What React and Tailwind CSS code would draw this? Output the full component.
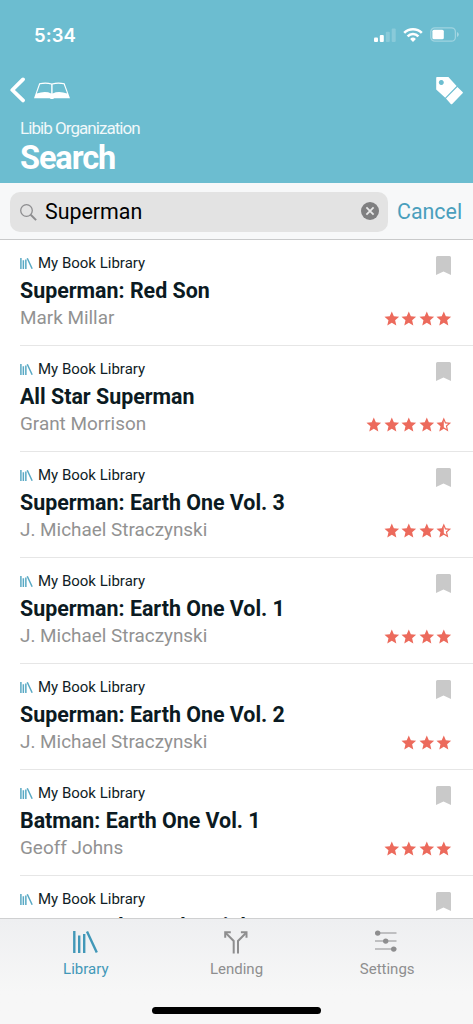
import React from "react";

const books = [
  { id: 1, title: "Superman: Red Son", author: "Mark Millar", rating: 4 },
  { id: 2, title: "All Star Superman", author: "Grant Morrison", rating: 4.5 },
  { id: 3, title: "Superman: Earth One Vol. 3", author: "J. Michael Straczynski", rating: 3.5 },
  { id: 4, title: "Superman: Earth One Vol. 1", author: "J. Michael Straczynski", rating: 4 },
  { id: 5, title: "Superman: Earth One Vol. 2", author: "J. Michael Straczynski", rating: 3 },
  { id: 6, title: "Batman: Earth One Vol. 1", author: "Geoff Johns", rating: 4 },
  { id: 7, title: "Batman: The Dark Knight R", rating: 0 },
];

const LibraryIcon = ({ className }) => (
  <svg viewBox="0 0 25 22" className={className} fill="none" stroke="currentColor">
    <path d="M1.3 0v22M6.2 4.5V22M11.2 3v19M14 .6l9.8 20.8" />
  </svg>
);

const LendingIcon = () => (
  <svg viewBox="0 0 24 23" className="w-6 h-[23px] -ml-px" fill="none" stroke="currentColor" strokeWidth="2">
    <path d="M9.7 22.5V10L2 2.2M14 22.5V10l7.7-7.8" />
    <path d="M1.2 6.8V1.2h5.6M16.9 1.2h5.6v5.6" />
  </svg>
);

const SettingsIcon = () => (
  <svg viewBox="0 0 22 22" className="w-[22px] h-[22px] -ml-[2px] -mt-[3px]" fill="currentColor">
    <path d="M0 2.6h21.5v1H0zM0 10.6h21.5v1H0zM0 18.6h21.5v1H0z" />
    <circle cx="2.7" cy="3.1" r="2.7" />
    <circle cx="10.7" cy="11.1" r="2.7" />
    <circle cx="18.7" cy="19.1" r="2.7" />
  </svg>
);

const Star = ({ half }) => (
  <svg viewBox="0 0 24 24" className="w-[17.6px] h-[17.6px]" fill="#ec6a5c">
    {half ? (
      <path d="M22 9.24l-7.19-.62L12 2 9.19 8.63 2 9.24l5.46 4.73L5.82 21 12 17.27 18.18 21l-1.63-7.03L22 9.24zM12 15.4V6.1l1.71 4.04 4.38.38-3.32 2.88 1 4.28L12 15.4z" />
    ) : (
      <path d="M12 17.27L18.18 21l-1.64-7.03L22 9.24l-7.19-.61L12 2 9.19 8.63 2 9.24l5.46 4.73L5.82 21z" />
    )}
  </svg>
);

const Stars = ({ rating }) => (
  <div className="flex">
    {Array.from({ length: Math.ceil(rating) }, (_, i) => (
      <Star key={i} half={i + 1 > rating} />
    ))}
  </div>
);

const StatusBar = () => (
  <div className="flex items-center justify-between h-[69px] pl-[34px] pr-[14px] text-white">
    <span className="pt-[2px] font-[Inter] text-[18.5px] font-semibold tracking-[0.1px]">5:34</span>
    <div className="flex items-center gap-[7px]">
      <svg viewBox="0 0 22 14" className="w-[22px] h-[14px]" fill="#fff">
        <rect x="0" y="9.5" width="4" height="4.5" rx="1" />
        <rect x="5.8" y="7" width="4" height="7" rx="1" />
        <rect x="11.8" y="3.7" width="4" height="10.3" rx="1" opacity=".2" />
        <rect x="17.7" y="0.4" width="4" height="13.6" rx="1" opacity=".2" />
      </svg>
      <svg viewBox="0 0 20 15" className="w-5 h-[15px]" fill="none" stroke="#fff" strokeWidth="2.6">
        <path d="M1.2 5.9a12.3 12.3 0 0 1 17.6 0M4.6 9.3a7.6 7.6 0 0 1 10.8 0" />
        <path d="M10 15l-2.9-3a4.2 4.2 0 0 1 5.8 0z" fill="#fff" stroke="none" />
      </svg>
      <svg viewBox="0 0 29 15" className="w-[29px] h-[15px]">
        <rect x=".8" y=".8" width="24.6" height="13.4" rx="4" fill="none" stroke="#fff" strokeOpacity=".35" strokeWidth="1.3" />
        <rect x="2.4" y="2.8" width="11.4" height="9.4" rx="1.5" fill="#fff" />
        <path d="M27 5v5q1.8-.8 1.8-2.5T27 5z" fill="#fff" opacity=".4" />
      </svg>
    </div>
  </div>
);

const Header = () => (
  <header className="h-[183px] bg-[#6cbdd0] text-white">
    <StatusBar />
    <div className="flex items-start justify-between h-[47px] pt-2 px-[10px]">
      <div className="flex items-start gap-[9px]">
        <svg viewBox="0 0 15 26" className="w-[15px] h-[26px]" fill="none" stroke="#fff" strokeWidth="3.8" strokeLinecap="round" strokeLinejoin="round">
          <path d="M13 2.4L2.3 13 13 23.4" />
        </svg>
        <svg viewBox="0 0 36 18" className="w-9 h-[18px] mt-[5px]" fill="#fff">
          <path fillRule="evenodd" d="M5.2 1.2Q12-.2 17.9 1.4 23.8-.2 30.6 1.2L36 16.2H20.2q-2.3 1.8-4.5 0H0zM6.1 2.2L2.8 11.6Q11 8.6 17.2 11.4V2.4Q12 1 6.1 2.2zM29.7 2.2Q23.8 1 18.6 2.4v9Q25 8.6 33.1 11.6z" />
        </svg>
      </div>
      <svg viewBox="0 0 27 28" className="w-[27px] h-7" fill="#fff">
        <path fillRule="evenodd" d="M1 0h11.4l8.2 9L9.2 20.7.2 12.6V.8Q.2 0 1 0zM5.3 3.1a2.5 2.5 0 1 0 .01 0z" />
        <path d="M21.4 9.9l5.2 5.2q.6.6 0 1.2L16.2 27q-.7.7-1.4 0L10 21.6z" />
      </svg>
    </div>
    <div className="pl-5">
      <p className="text-[17px] leading-6 tracking-[-0.95px] opacity-90">Libib Organization</p>
      <h1 className="text-[32.5px] leading-9 font-bold tracking-[-1.1px]">Search</h1>
    </div>
  </header>
);

const SearchBar = () => (
  <div className="flex items-center h-[57px] px-[10px] bg-[#f7f8f9] border-b border-[#c9cacb]">
    <div className="flex items-center w-[378px] h-10 mt-px pl-[10px] pr-[9px] rounded-[10px] bg-[#e3e3e3]">
      <svg viewBox="0 0 17 17" className="w-[17px] h-[17px] mt-0.5" fill="none" stroke="#8d8d8f">
        <circle cx="6.5" cy="6.5" r="5.8" strokeWidth="1.3" />
        <path d="M10.7 10.7l5.4 5.4" strokeWidth="2" />
      </svg>
      <span className="flex-1 pl-2 text-[21.4px] leading-10 text-black">Superman</span>
      <svg viewBox="0 0 18 18" className="w-[18px] h-[18px] -mt-0.5">
        <circle cx="9" cy="9" r="9" fill="#7f7f80" />
        <path d="M5.4 5.4l7.2 7.2M12.6 5.4l-7.2 7.2" stroke="#e8e8e8" strokeWidth="1.8" />
      </svg>
    </div>
    <button className="pt-px pl-[9px] text-[21.4px] leading-10 text-[#4a9fbd]">Cancel</button>
  </div>
);

const BookRow = ({ book }) => (
  <li className="flex justify-between h-[106px] ml-5 pt-3 pr-[21px] border-b border-[#e6e6e6] shrink-0">
    <div className="whitespace-nowrap">
      <div className="flex items-center gap-[5px] text-[15px] leading-[22px] text-[#0f1d26]">
        <LibraryIcon className="w-[13px] h-[11px] stroke-3 text-[#59a9c4]" />
        <span>My Book Library</span>
      </div>
      <h2 className="pt-[2px] text-[21.4px] leading-[29px] font-bold text-[#0b1a22]">{book.title}</h2>
      {book.author && (
        <p className="text-[18.9px] leading-[26px] text-[#929292]">{book.author}</p>
      )}
    </div>
    <div className="flex flex-col items-end">
      <svg viewBox="0 0 15 19" className="w-[15px] h-[19px] mt-1 mr-px" fill="#c9c9c9">
        <path d="M1.5 0h12Q15 0 15 1.5V19l-7.5-3.6L0 19V1.5Q0 0 1.5 0z" />
      </svg>
      <div className="mt-[35px] -mr-px">
        <Stars rating={book.rating} />
      </div>
    </div>
  </li>
);

const TabItem = ({ label, active, children }) => (
  <button
    className={`flex flex-col items-center w-[150.7px] text-[15px] ${
      active ? "text-[#4298b8]" : "text-[#8e8e8f]"
    }`}
  >
    <span className="flex items-center justify-center h-6">{children}</span>
    <span className="mt-[5px] leading-5">{label}</span>
  </button>
);

const TabBar = () => (
  <nav className="flex flex-col items-center justify-between h-[106px] pb-[10px] border-t border-[#cfd0d1] bg-linear-to-b from-[#eeeff1] to-[#f7f7f7] to-70% shrink-0">
    <div className="flex justify-center w-full pt-[11px]">
      <TabItem label="Library" active>
        <LibraryIcon className="w-[25px] h-[22px] stroke-[2.4]" />
      </TabItem>
      <TabItem label="Lending">
        <LendingIcon />
      </TabItem>
      <TabItem label="Settings">
        <SettingsIcon />
      </TabItem>
    </div>
    <div className="w-[169px] h-[7px] rounded-full bg-black" />
  </nav>
);

const App = () => {
  return (
    <div className="flex flex-col w-[473px] h-[1024px] overflow-hidden bg-white font-[Roboto,sans-serif]">
      <Header />
      <SearchBar />
      <ul className="flex flex-col flex-1 min-h-0 overflow-hidden">
        {books.map((book) => (
          <BookRow key={book.id} book={book} />
        ))}
      </ul>
      <TabBar />
    </div>
  );
};

export default App;
